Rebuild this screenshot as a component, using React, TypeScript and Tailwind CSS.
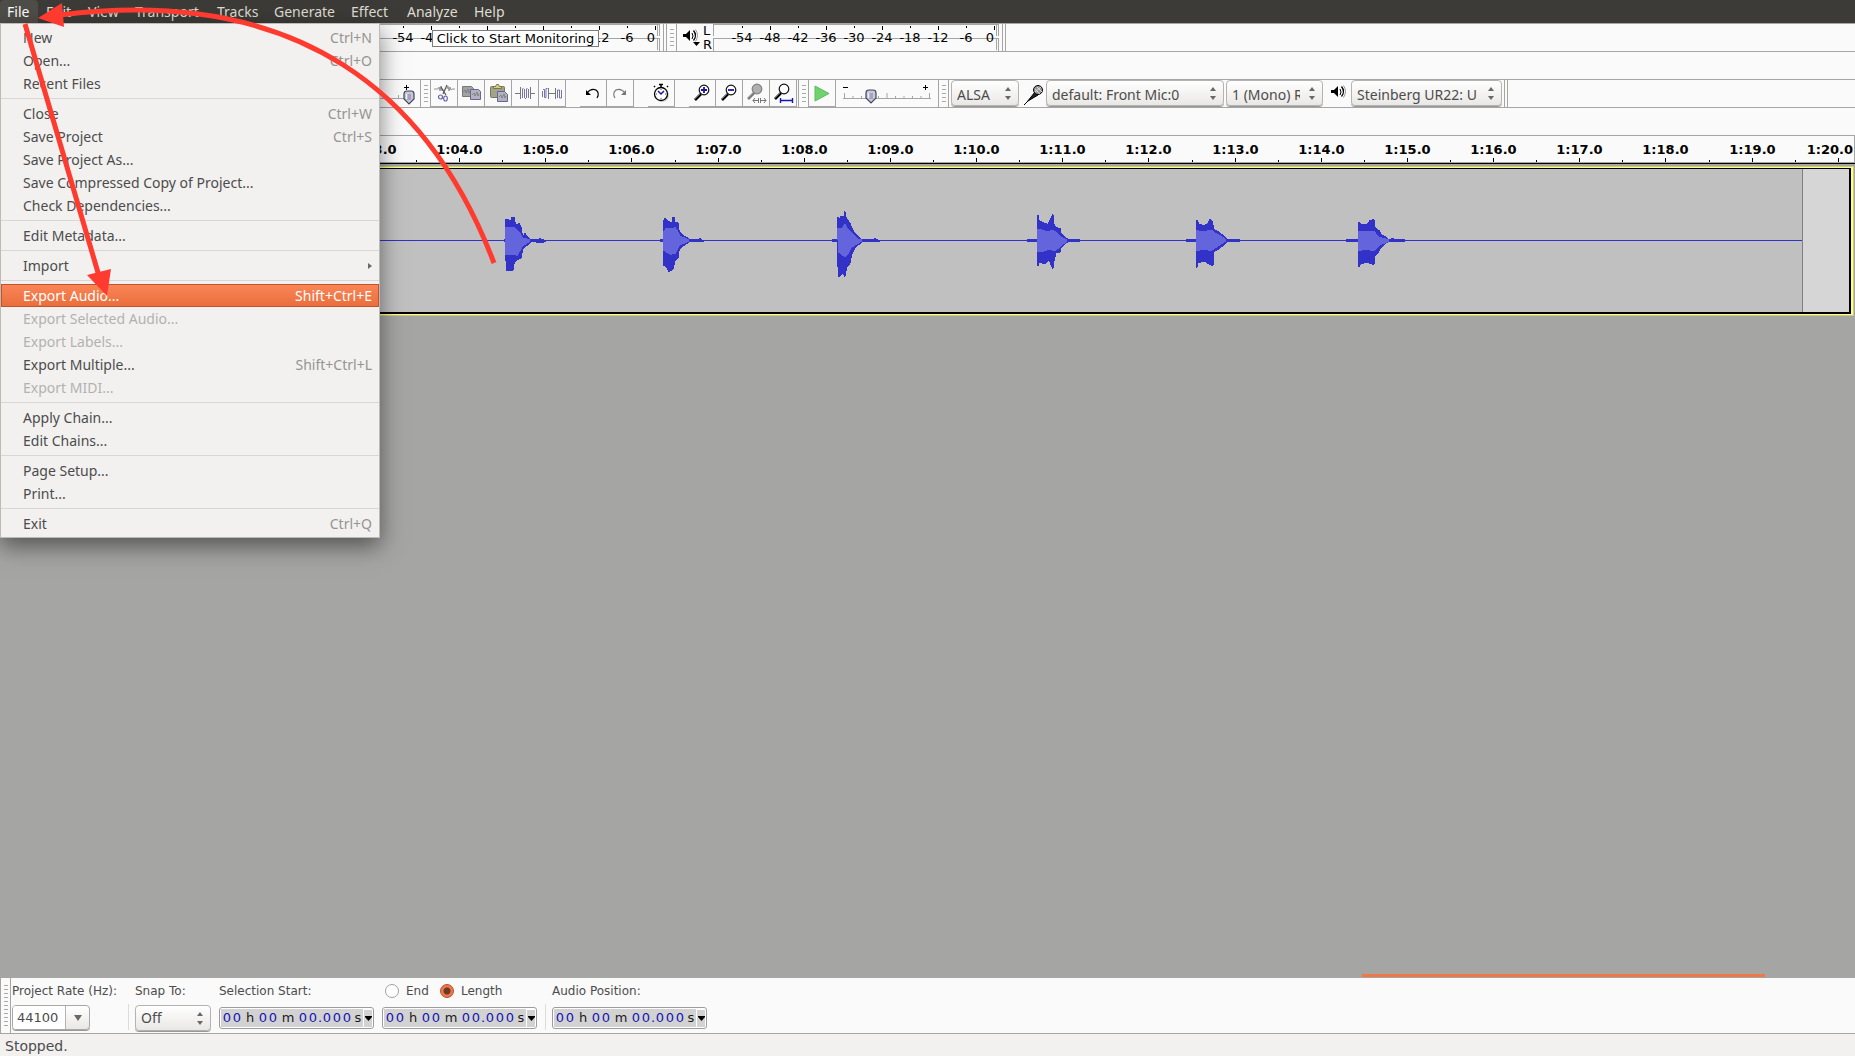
import type { ReactNode } from 'react';

const MENUS = [
  { name: 'File', width: 'w-[38px]' },
  { name: 'Edit', width: 'w-[42px]' },
  { name: 'View', width: 'w-[47px]' },
  { name: 'Transport', width: 'w-[82px]' },
  { name: 'Tracks', width: 'w-[57px]' },
  { name: 'Generate', width: 'w-[77px]' },
  { name: 'Effect', width: 'w-[56px]' },
  { name: 'Analyze', width: 'w-[67px]' },
  { name: 'Help', width: 'w-[46px]' },
];

type Item = { label: string; keys?: string; disabled?: boolean; active?: boolean; submenu?: boolean };

const FILE_MENU: Item[][] = [
  [{ label: 'New', keys: 'Ctrl+N' }, { label: 'Open...', keys: 'Ctrl+O' }, { label: 'Recent Files' }],
  [
    { label: 'Close', keys: 'Ctrl+W' },
    { label: 'Save Project', keys: 'Ctrl+S' },
    { label: 'Save Project As...' },
    { label: 'Save Compressed Copy of Project...' },
    { label: 'Check Dependencies...' },
  ],
  [{ label: 'Edit Metadata...' }],
  [{ label: 'Import', submenu: true }],
  [
    { label: 'Export Audio...', keys: 'Shift+Ctrl+E', active: true },
    { label: 'Export Selected Audio...', disabled: true },
    { label: 'Export Labels...', disabled: true },
    { label: 'Export Multiple...', keys: 'Shift+Ctrl+L' },
    { label: 'Export MIDI...', disabled: true },
  ],
  [{ label: 'Apply Chain...' }, { label: 'Edit Chains...' }],
  [{ label: 'Page Setup...' }, { label: 'Print...' }],
  [{ label: 'Exit', keys: 'Ctrl+Q' }],
];

// Peak and RMS outlines, relative to the start of each sound on the zero line
const BURSTS = [
  {
    x: 505,
    lead: 1,
    peak: '0,-14 1,-21 6,-20 7,-23 9,-23 10,-18 12,-15 14,-17 16,-14 17,-7 19,-4 20,-7 22,-4 26,-1 33,-1 35,-2 37,-1 40,0 40,1 37,2 35,2 26,1 22,5 18,8 16,18 12,19 9,23 8,30 2,30 1,20 0,14',
    rms: '0,-14 8,-14 11,-12 15,-8 18,-3 25,-1 25,1 18,6 12,16 10,14 3,14 0,15',
  },
  {
    x: 663,
    lead: 3,
    peak: '0,-18 2,-22 5,-19 9,-18 10,-23 11,-23 12,-18 15,-18 16,-10 19,-6 22,-4 27,-1 36,-1 37,-2 40,0 40,1 27,1 24,3 19,6 16,10 15,18 12,20 10,29 6,31 4,27 1,25 0,20',
    rms: '0,-9 3,-13 10,-12 12,-14 14,-11 17,-5 26,-1 26,1 17,5 12,14 10,13 8,15 5,13 0,10',
  },
  {
    x: 837,
    lead: 5,
    peak: '0,-13 1,-23 3,-21 4,-24 7,-24 8,-29 9,-23 13,-17 15,-12 18,-7 21,-4 25,-1 36,-1 38,-2 40,-1 42,0 42,1 26,1 22,4 18,7 15,13 13,23 10,26 8,36 6,33 2,36 1,26 0,14',
    rms: '0,-13 4,-12 8,-17 11,-12 16,-7 21,-2 25,-1 25,1 20,4 15,7 11,14 8,17 4,14 1,12',
  },
  {
    x: 1037,
    lead: 10,
    peak: '0,-14 1,-25 2,-20 8,-17 11,-16 14,-22 16,-26 17,-16 19,-13 23,-12 24,-7 28,-3 32,-1 42,-1 42,1 32,1 28,3 24,7 23,12 19,12 17,20 16,28 14,24 12,19 8,23 2,22 1,25 0,14',
    rms: '0,-12 5,-11 10,-9 15,-11 19,-9 24,-4 30,-1 30,1 24,6 18,11 12,9 5,12 0,11',
  },
  {
    x: 1196,
    lead: 10,
    peak: '0,-14 1,-20 3,-16 8,-15 12,-17 14,-21 16,-20 18,-11 22,-9 27,-5 31,-1 43,-1 43,1 31,1 27,5 22,9 18,11 17,25 14,24 9,21 2,22 1,27 0,14',
    rms: '0,-11 6,-9 16,-11 19,-8 25,-5 30,-1 30,1 25,4 19,8 15,11 8,9 0,11',
  },
  {
    x: 1358,
    lead: 12,
    peak: '0,-14 1,-18 4,-16 9,-16 12,-20 16,-21 17,-13 21,-10 24,-5 27,-4 31,-1 35,-2 37,-1 46,-1 46,1 31,1 27,3 22,8 20,12 17,15 16,24 10,22 3,23 1,26 0,14',
    rms: '0,-10 6,-9 12,-10 16,-10 21,-4 31,-1 31,1 22,5 16,11 7,9 0,11',
  },
];

const DECIBELS = [-54, -48, -42, -36, -30, -24, -18, -12, -6, 0];
const SECONDS = Array.from({ length: 18 }, (_, i) => i + 3);

function rulerLabel(s: number) {
  return `1:${String(s).padStart(2, '0')}.0`;
}

function Grabber({ tall = false }: { tall?: boolean }) {
  const dashes = tall ? 11 : 5;
  return (
    <div className="flex w-[11px] shrink-0 flex-col items-center justify-center gap-[3px] self-stretch border-x border-[#a5a5a3]">
      {Array.from({ length: dashes }, (_, i) => (
        <span key={i} className="h-px w-1 bg-[#a9a9a7]" />
      ))}
    </div>
  );
}

// `covered` lists the scale labels that lie wholly under the monitoring button
function Meter({ covered = [] }: { covered?: number[] }) {
  return (
    <svg width="288" height="27" className="shrink-0 font-['DejaVu_Sans',sans-serif] text-[13px]">
      <g stroke="#a5a5a3" fill="none" shapeRendering="crispEdges">
        <path d="M0.5 12V0.5H285.5V12M0.5 27V14.5H285.5V27M283.5 1V12M283.5 15V26" />
      </g>
      {DECIBELS.map((db, i) => (
        <g key={db}>
          <path d={`M${29.5 + i * 28} 2v${i % 2 ? 4 : 2}`} stroke="#000" />
          {!covered.includes(db) && (
            <text x={db === 0 ? 281 : 29 + i * 28} y="18" textAnchor={db === 0 ? 'end' : 'middle'}>
              {db}
            </text>
          )}
        </g>
      ))}
    </svg>
  );
}

function Speaker() {
  return (
    <svg width="20" height="20" viewBox="0 0 20 20" fill="none" stroke="#000">
      <path d="M0 8h3l4-4v11l-4-4H0z" fill="#000" stroke="none" />
      <path d="M9 7q2 3 0 6" />
      <path d="M10.500 4.500q4 5 0 10" strokeWidth="1.300" />
      <path d="M12.500 3.500q4 6 0 12" stroke="#999" />
    </svg>
  );
}

function Microphone() {
  return (
    <svg width="22" height="22" viewBox="0 0 22 22" stroke="#000">
      <path d="M1 21l4-4" />
      <path d="M4 18L12 8l3 3L5 17z" fill="#222" />
      <circle cx="15" cy="6" r="4.5" fill="#999" />
      <path d="M12 5l5 5M14 3l5 5M12 8l6-5" stroke="#e8e8e8" strokeWidth="0.8" />
    </svg>
  );
}

function Knob({ x, y }: { x: number; y: number }) {
  return (
    <g transform={`translate(${x} ${y})`}>
      <path d="M-5 1q0-3 3-3h4q3 0 3 3v5l-5 5-5-5z" fill="#c9c9dc" stroke="#45455a" strokeWidth="1.2" />
      <path d="M-3 1h2v5h-2z" fill="#f2f2fc" />
      <path d="M-2 2h4M-2 4h4M-2 6h4" stroke="#6d6d92" strokeWidth="0.8" />
    </g>
  );
}

function ToolButton({ label, children }: { label: string; children: ReactNode }) {
  return (
    <button aria-label={label} className="h-[27px] w-[27px] shrink-0 border-r border-b border-[#a5a5a3] bg-[#fafafa]">
      <svg width="26" height="26" viewBox="0 0 26 26" fill="none">
        {children}
      </svg>
    </button>
  );
}

function Lens({ gray = false, cx = 15, cy = 10 }: { gray?: boolean; cx?: number; cy?: number }) {
  return (
    <g transform={`translate(${cx} ${cy})`}>
      <path d="M-3 4L-9 10" stroke={gray ? '#777' : '#000'} strokeWidth="2.6" />
      <path d="M-4 4L-9 9" stroke={gray ? '#aaa' : '#999'} strokeWidth="0.7" />
      <circle r="4.8" fill={gray ? '#b0b0b0' : '#fff'} stroke={gray ? '#808080' : '#111'} strokeWidth="1.2" />
    </g>
  );
}

function Choice({ label, value, className, textClass }: { label: string; value: string; className: string; textClass: string }) {
  return (
    <div className={`relative shrink-0 ${className}`}>
      <select
        aria-label={label}
        className={`h-[26px] w-full appearance-none overflow-hidden rounded-[4px] border border-[#b4b3b0] bg-linear-to-b from-white to-[#e9e8e6] pr-[22px] pl-[5px] text-[14px] leading-5 text-[#4c4c4c] shadow-[0_1px_0_#999] ${textClass}`}
      >
        <option>{value}</option>
      </select>
      <svg width="8" height="14" viewBox="0 0 8 14" className="pointer-events-none absolute top-[7px] right-[7px]" fill="#686868">
        <path d="M1 4l3-4 3 4zM1 9l3 4 3-4z" />
      </svg>
    </div>
  );
}

const CELLS: [string, string][] = [
  ['0', 'w-[10px]'],
  ['0', 'w-[10px]'],
  ['h', 'w-4'],
  ['0', 'w-[10px]'],
  ['0', 'w-[10px]'],
  ['m', 'w-5'],
  ['0', 'w-[10px]'],
  ['0', 'w-[10px]'],
  ['.', 'w-1'],
  ['0', 'w-[10px]'],
  ['0', 'w-[10px]'],
  ['0', 'w-[10px]'],
  ['s', 'w-3'],
];

function TimeField({ label }: { label: string }) {
  return (
    <div role="group" aria-label={label} className="flex h-[22px] w-[155px] rounded-[3px] border border-[#9d9d9b] bg-white p-px">
      <div className="flex w-[142px] items-center bg-[#d2d2d2] pl-px text-[13px]">
        {CELLS.map(([c, width], i) => (
          <span key={i} className={`flex shrink-0 justify-center ${width} ${/[a-z]/.test(c) ? 'text-[#1a1a1a]' : 'text-[#1414b4]'}`}>
            {c}
          </span>
        ))}
      </div>
      <button aria-label={`${label} format`} className="flex w-[9px] shrink-0 items-center justify-center border-t border-l border-white bg-[#d2d2d2]">
        <svg width="7" height="5" viewBox="0 0 7 5">
          <path d="M0 0h7v1L3.500 5 0 1z" />
        </svg>
      </button>
    </div>
  );
}

function MenuBar() {
  return (
    <nav className="flex h-[23px] bg-[#3c3b37] text-[14px] text-[#dfdbd2]">
      {MENUS.map((m) => (
        <button
          key={m.name}
          className={`shrink-0 text-left leading-[22px] whitespace-nowrap ${m.width} ${m.name === 'File' ? 'rounded-t-[4px] bg-[#4f4d48] pl-[7px] text-white' : 'pl-2'}`}
        >
          {m.name}
        </button>
      ))}
    </nav>
  );
}

function FileMenu() {
  return (
    <div
      role="menu"
      className="absolute top-[23px] left-0 z-10 w-[380px] border border-[#bdbbb7] bg-[#f2f1f0] py-0.5 text-[14px] shadow-[0_8px_22px_rgba(0,0,0,0.5)]"
    >
      {FILE_MENU.map((group, g) => (
        <div key={g}>
          {g > 0 && <div className="my-[3px] h-px bg-[#d9d7d5]" />}
          {group.map((item) => (
            <button
              key={item.label}
              role="menuitem"
              className={`flex h-[23px] w-full items-center justify-between pr-[7px] pl-[22px] ${
                item.active
                  ? 'bg-linear-to-b from-[#fb8657] to-[#e96d3b] text-white outline outline-[#c2532a] -outline-offset-1'
                  : item.disabled
                    ? 'text-[#b3b1af]'
                    : 'text-[#4c4c4c]'
              }`}
            >
              <span>{item.label}</span>
              {item.keys && <span className={item.active ? 'text-white' : 'text-[#959492]'}>{item.keys}</span>}
              {item.submenu && (
                <svg width="4" height="6" viewBox="0 0 4 6" fill="#6a6a6a">
                  <path d="M0 0l4 3-4 3z" />
                </svg>
              )}
            </button>
          ))}
        </div>
      ))}
    </div>
  );
}

function MeterBar() {
  return (
    <div className="flex h-[29px] border-y border-[#a5a5a3] bg-[#fafafa]">
      <div className="relative flex w-[664px] shrink-0 justify-end border-r border-[#a5a5a3] pr-px">
        <Meter covered={[-42, -36, -30, -24, -18]} />
        <button className="absolute top-[6px] left-[432px] h-[17px] w-[167px] border border-[#7c7c7c] bg-white font-['DejaVu_Sans',sans-serif] text-[13px] leading-[15px] whitespace-nowrap">
          <span className="flex justify-center">Click to Start Monitoring</span>
        </button>
      </div>
      <div className="w-0.5 shrink-0" />
      <Grabber />
      <div className="flex w-9 shrink-0 pl-[6px]">
        <div className="w-5 shrink-0 pt-0.5">
          <Speaker />
          <svg width="7" height="4" viewBox="0 0 7 4" className="-mt-1 ml-[10px]">
            <path d="M0 0h7L3.500 4z" />
          </svg>
        </div>
        <div className="font-['DejaVu_Sans',sans-serif] text-[13px] leading-[14px]">
          <div>L</div>
          <div>R</div>
        </div>
      </div>
      <Meter />
      <div className="ml-px w-1 shrink-0 border-x border-[#a5a5a3]" />
    </div>
  );
}

function EditBar() {
  return (
    <div className="flex h-[29px] border-y border-[#a5a5a3] bg-[#fafafa]">
      <div className="flex w-[420px] shrink-0 justify-end">
        <svg width="61" height="27">
          <path d="M0 18.500H50M39.500 15v3" stroke="#a5a5a3" />
          <path d="M45 7.500h5M47.500 5v5" stroke="#000" />
          <Knob x={50} y={13} />
        </svg>
      </div>
      <Grabber />
      <ToolButton label="Cut">
        <path d="M3 9h4l1-2 1 4 1-5 1 5 1-2M16 9l1-3 1 5 1-4 1 3 1-1h3" stroke="#888" strokeWidth="0.9" />
        <path d="M16 5l-4 9M10 7l5 8" stroke="#555" strokeWidth="1.2" />
        <circle cx="9.500" cy="17" r="2" stroke="#6464a8" strokeWidth="1.2" />
        <ellipse cx="14.500" cy="18.500" rx="1.800" ry="2.500" stroke="#6464a8" strokeWidth="1.2" />
      </ToolButton>
      <ToolButton label="Copy">
        <path d="M4.500 6.500h9l2 2v8h-11z" fill="#a2a2a2" stroke="#777" />
        <path d="M12.500 9.500h8l2 2v8h-10z" fill="#b2b2b8" stroke="#6464a8" />
        <path d="M5 12l2-2 1 3 2-4 1 4 1-2M14 15l2-2 1 3 2-4 1 4 1-2" stroke="#777" strokeWidth="0.8" />
      </ToolButton>
      <ToolButton label="Paste">
        <rect x="5.500" y="6.500" width="14" height="11" rx="1" fill="#a3a387" stroke="#77775c" />
        <path d="M8.500 8.500v-2h2l1-2h2l1 2h2v2z" fill="#cfcf78" stroke="#77775c" />
        <path d="M12.500 11.500h7l3 3v7h-10z" fill="#b2b2b8" stroke="#6464a8" />
        <path d="M14 17l2-2 1 3 2-4 1 4 1-2" stroke="#777" strokeWidth="0.8" />
      </ToolButton>
      <ToolButton label="Trim">
        <path d="M3 13.500h5M18 13.500h5M8.500 7v12M18.500 7v12" stroke="#777" />
        <path d="M10.500 9v9M10.500 8.500h1M12.500 9v9M13 18.500h1M14.500 9v9M14.500 8.500h1M16.500 9v9" stroke="#6464a8" strokeWidth="0.9" />
      </ToolButton>
      <ToolButton label="Silence">
        <path d="M9 13.500h8M9.500 8v11M16.500 8v11" stroke="#777" />
        <path d="M3.500 11v6M4 9.500h1.500v8H7V8.500h1.500M18.500 18v-8h2v8h2v-8" stroke="#6464a8" strokeWidth="0.9" />
      </ToolButton>
      <div className="w-[14px] shrink-0" />
      <ToolButton label="Undo">
        <path d="M7 13q4-5 9-3 4 3 1 8" stroke="#000" strokeWidth="1.2" />
        <path d="M6 10v5h5z" fill="#000" />
      </ToolButton>
      <ToolButton label="Redo">
        <path d="M18 13q-4-5-9-3-4 3-1 8" stroke="#777" strokeWidth="1.1" />
        <path d="M19 10v5h-5z" fill="#777" />
      </ToolButton>
      <div className="w-[14px] shrink-0" />
      <ToolButton label="Sync-Lock Tracks">
        <path d="M11 4.500h4M13 4v3M7 7l-1-1M19 7l1-1" stroke="#000" strokeWidth="1.500" />
        <circle cx="14" cy="15" r="7" fill="#cfcfcf" />
        <circle cx="13" cy="14" r="6.500" fill="#fff" stroke="#000" strokeWidth="1.300" />
        <path d="M13 9v1M18 14h-1M13 19v-1M8 14h1" stroke="#555" />
        <path d="M10 11l3 3 3-3" stroke="#1414b4" strokeWidth="1.500" />
      </ToolButton>
      <div className="w-[14px] shrink-0" />
      <ToolButton label="Zoom In">
        <Lens />
        <path d="M12 10h6M15 7v6" stroke="#1414b4" strokeWidth="1.800" />
      </ToolButton>
      <ToolButton label="Zoom Out">
        <Lens />
        <path d="M12 10h6" stroke="#1414b4" strokeWidth="1.800" />
      </ToolButton>
      <ToolButton label="Fit Selection">
        <Lens gray cx={14} cy={9} />
        <path d="M10 20.500h5M17 20.500h6M12 18l-2 2.500 2 2.500M21 18l2 2.500-2 2.500M15.500 18v5M17.500 18v5" stroke="#777" />
      </ToolButton>
      <ToolButton label="Fit Project">
        <Lens cx={14} cy={9} />
        <path d="M10 20.500h12M10.500 18v5M22.500 18v5" stroke="#1414b4" strokeWidth="1.400" />
      </ToolButton>
      <div className="w-px shrink-0" />
      <Grabber />
      <ToolButton label="Play at Speed">
        <path d="M6 6v15l14-7.500z" fill="#6fd26f" stroke="#5cbc5c" />
      </ToolButton>
      <svg width="102" height="27" className="shrink-0">
        <path d="M7 18.500H95" stroke="#a5a5a3" />
        {Array.from({ length: 11 }, (_, i) => (
          <path key={i} d={`M${8.5 + i * 8.5} ${i % 5 ? 16 : 13}v${i % 5 ? 2 : 5}`} stroke="#a5a5a3" />
        ))}
        <path d="M7 7.500h5M87 7.500h5M89.500 5v5" stroke="#000" />
        <Knob x={35} y={12} />
      </svg>
      <Grabber />
      <div className="flex items-start gap-0.5 pl-0.5">
        <Choice label="Audio Host" value="ALSA" className="w-[68px]" textClass="pt-1" />
        <div className="w-[23px] pt-1 pl-0.5">
          <Microphone />
        </div>
        <Choice label="Recording Device" value="default: Front Mic:0" className="w-[178px]" textClass="pt-1" />
        <Choice label="Recording Channels" value="1 (Mono) Recording Channel" className="w-[97px]" textClass="pt-1" />
        <div className="w-6 pt-0.5 pl-[6px]">
          <Speaker />
        </div>
        <Choice label="Playback Device" value="Steinberg UR22: U" className="w-[151px]" textClass="pt-1" />
      </div>
      <div className="ml-0.5 w-1 shrink-0 border-x border-[#a5a5a3]" />
    </div>
  );
}

function Timeline() {
  return (
    <div className="border-y border-r border-[#a5a5a3] bg-[#fafafa]">
      <svg width="100%" height="26" className="block font-['DejaVu_Sans',sans-serif] text-[13px] font-bold">
        {SECONDS.map((s) => {
          const x = Math.round(459 + (s - 4) * 86.17) + 0.5;
          return (
            <g key={s}>
              <path d={`M${x} 22v4M${x - 43} 24v2`} stroke="#000" />
              <text x={s === 20 ? 1853 : x} y="18" textAnchor={s === 20 ? 'end' : 'middle'}>
                {rulerLabel(s)}
              </text>
            </g>
          );
        })}
      </svg>
    </div>
  );
}

function Track() {
  return (
    <div className="border-t border-black pt-0.5 pr-px">
      <div className="border-y border-r border-[#c8c88c]">
        <div className="border-y border-r-2 border-[#ffff80]">
          <div className="flex h-[146px] border-t border-r-2 border-b-2 border-black bg-[#d6d6d6]">
            <svg height="143" className="min-w-0 flex-1 border-r border-[#808080] bg-[#c0c0c0]" shapeRendering="crispEdges">
              <path d="M0 71.500H1803" stroke="#3232c8" />
              {BURSTS.map((b) => (
                <g key={b.x} transform={`translate(${b.x} 71.500)`}>
                  <path d={`M${-b.lead} 0H2`} stroke="#3232c8" strokeWidth="3" />
                  <polygon points={b.peak} fill="#3232c8" stroke="#3232c8" />
                  <polygon points={b.rms} fill="#6464dc" />
                </g>
              ))}
            </svg>
            <div className="w-[46px] shrink-0" />
          </div>
        </div>
      </div>
    </div>
  );
}

function SelectionBar() {
  return (
    <div className="flex h-[56px] border-b border-[#a5a5a3] bg-[#fafafa] font-['DejaVu_Sans',sans-serif] text-[12px] text-[#4c4c4c]">
      <Grabber tall />
      <div className="w-[117px] pt-[5px] pl-px">
        <label htmlFor="rate" className="block h-[22px] leading-4 whitespace-nowrap">Project Rate (Hz):</label>
        <div className="flex h-[25px] w-[78px] rounded-[4px] border border-[#a9a8a5] bg-linear-to-b from-white to-[#e9e8e6] shadow-[0_1px_0_#999]">
          <input id="rate" defaultValue="44100" className="w-[53px] rounded-l-[3px] border-r border-[#b4b3b0] bg-white pl-1 text-[13px]" />
          <button aria-label="Project rates" className="flex flex-1 items-center justify-center">
            <svg width="8" height="6" viewBox="0 0 8 6" fill="#686868">
              <path d="M0 0h8L4 6z" />
            </svg>
          </button>
        </div>
      </div>
      <div className="mt-[26px] h-[26px] w-px bg-[#dcdcda]" />
      <div className="w-[90px] pt-[5px] pl-[6px]">
        <div className="h-[22px] leading-4">Snap To:</div>
        <Choice label="Snap To" value="Off" className="w-[76px]" textClass="font-['Noto_Sans',sans-serif]" />
      </div>
      <div className="w-[163px] pt-[5px]">
        <div className="h-6 leading-4">Selection Start:</div>
        <TimeField label="Selection Start" />
      </div>
      <div className="w-[163px] pt-[5px]">
        <div className="flex h-6 items-start pl-[3px] leading-4">
          <label className="flex w-[55px] items-center gap-[7px]">
            <input type="radio" name="range" className="h-[14px] w-[14px] appearance-none rounded-full border border-[#a0a0a0] bg-white" />
            End
          </label>
          <label className="flex items-center gap-[7px]">
            <input
              type="radio"
              name="range"
              defaultChecked
              className="h-[14px] w-[14px] appearance-none rounded-full border border-[#b4502a] bg-[radial-gradient(circle,#6b3a28_0_3px,#f07746_4px)]"
            />
            Length
          </label>
        </div>
        <TimeField label="Length" />
      </div>
      <div className="mt-[26px] h-[26px] w-px bg-[#dcdcda]" />
      <div className="pt-[5px] pl-[6px]">
        <div className="h-6 leading-4">Audio Position:</div>
        <TimeField label="Audio Position" />
      </div>
    </div>
  );
}

function Arrows() {
  return (
    <svg width="520" height="310" className="pointer-events-none absolute top-0 left-0 z-20" fill="none" stroke="#ff3b2f" strokeWidth="5">
      <path d="M494 263C430 95 300 -15 60 15" />
      <path d="M25 24L99 276" />
      <path d="M38 18L62 3l2 24zM87 275l24-6-4 27z" fill="#ff3b2f" stroke="none" />
    </svg>
  );
}

export default function App() {
  return (
    <div className="relative flex min-h-screen flex-col overflow-hidden bg-[#fafafa] font-['Noto_Sans',sans-serif] text-black">
      <MenuBar />
      <FileMenu />
      <MeterBar />
      <div className="h-[27px]" />
      <EditBar />
      <div className="h-[27px]" />
      <main className="flex flex-1 flex-col bg-[#a5a5a3]">
        <Timeline />
        <Track />
        <div className="flex flex-1 items-end justify-end pr-[90px] pb-px">
          <div className="h-[3px] w-[403px] bg-[#f07746]" />
        </div>
      </main>
      <SelectionBar />
      <footer className="h-[22px] bg-[#f2f1f0] pl-[5px] font-['DejaVu_Sans',sans-serif] text-[14px] leading-6 text-[#4c4c4c]">Stopped.</footer>
      <Arrows />
    </div>
  );
}
